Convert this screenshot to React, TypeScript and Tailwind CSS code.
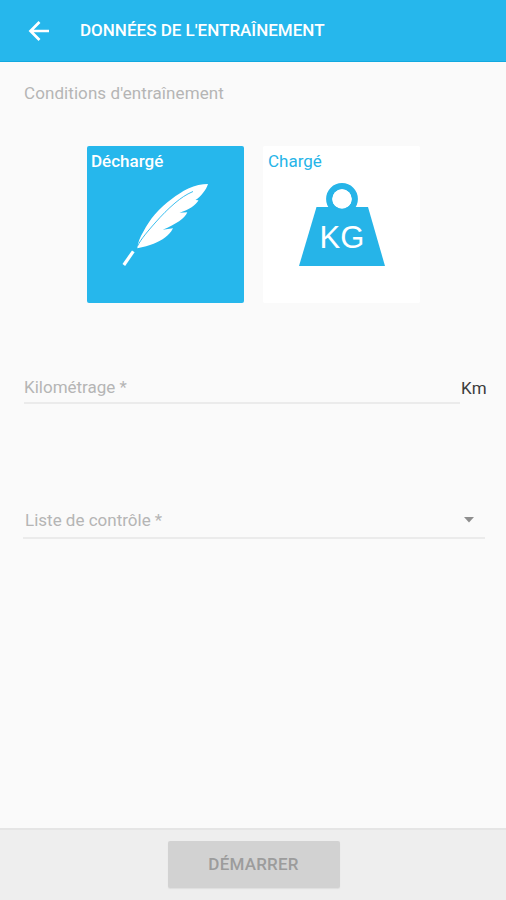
import { useState } from 'react';
import { clsx } from 'clsx';

type Condition = 'unloaded' | 'loaded';

const BackIcon = () => (
  <svg viewBox="0 0 22 22" className="w-[22px] h-[22px]" fill="none" stroke="white" strokeWidth="2.7">
    <path d="M21 11H3M11.500 2L2.500 11l9 9" />
  </svg>
);

const FeatherIcon = () => (
  <svg viewBox="0 0 90 90" className="w-[90px] h-[90px]">
    <path
      d="M17.300 68.300C18 62 20 57 23.300 51.700C26.500 46 30 40 35 34.300C40 28.500 46 23 51.700 19C57 15 62 11.500 68.300 8.500C75 5.300 82 4 88 4C87 7 85.500 10 83.300 12.500C81 15.500 78.500 18 75.500 20L78.500 20.300C76 25 69 30 59.500 32.700L67.300 32.300C65 38 56 44.500 42.700 49.700L53 48.300C50.500 53 48 55.500 45 57.500C39 62 30 66 17.300 68.300Z"
      fill="white"
    />
    <path d="M17.500 66C21 59 28 51 35 43C42 35 48 29 55 23C61 18 66 14.500 73 11.500" fill="none" stroke="#26b7ec" strokeWidth="0.9" />
    <path d="M13.300 71.300L3.800 85" stroke="white" strokeWidth="3.200" />
  </svg>
);

const WeightIcon = () => (
  <svg viewBox="0 0 86 84" className="w-[86px] h-[84px]">
    <circle cx="43" cy="17" r="12.800" fill="none" stroke="#26b4e8" strokeWidth="6.200" />
    <path d="M17.500 25H69L86 84H0Z" fill="#26b4e8" />
    <circle cx="43" cy="17" r="9.700" fill="white" />
    <text x="43" y="66" textAnchor="middle" fontSize="31" fontFamily="'Liberation Sans', sans-serif" fill="white">
      KG
    </text>
  </svg>
);

export default function App() {
  const [condition, setCondition] = useState<Condition>('unloaded');

  const cardClass = (value: Condition) =>
    clsx(
      'w-[157px] h-[157px] rounded-[2px] flex flex-col text-left text-[17px] leading-5 pt-[5px]',
      condition === value ? 'bg-[#26b7ec]' : 'bg-white',
    );

  return (
    <div className="h-screen flex flex-col bg-[#fafafa] font-['Roboto',sans-serif]">
      <header className="h-[62px] shrink-0 flex items-center bg-[#26b7ec] border-b border-[#12a9df] pl-7">
        <button aria-label="Retour">
          <BackIcon />
        </button>
        <h1 className="ml-[30px] text-[17px] font-medium text-white whitespace-nowrap">
          DONNÉES DE L'ENTRAÎNEMENT
        </h1>
      </header>

      <main className="flex-1 text-[17px] leading-5 text-[#b5b5b5]">
        <p className="pl-6 pt-[21px] tracking-[0.08px]">Conditions d'entraînement</p>

        <div className="flex justify-center gap-[19px] mt-[43px] pl-px">
          <button className={cardClass('unloaded')} onClick={() => setCondition('unloaded')}>
            <span className="pl-1 font-medium text-white">Déchargé</span>
            <span className="pl-[33px] pt-[9px]">
              <FeatherIcon />
            </span>
          </button>
          <button className={cardClass('loaded')} onClick={() => setCondition('loaded')}>
            <span className="pl-[5px] text-[#26b4e8]">Chargé</span>
            <span className="pl-9 pt-[11px]">
              <WeightIcon />
            </span>
          </button>
        </div>

        <div className="flex items-start mt-[74px] pl-6">
          <label className="w-[436px] h-[27px] border-b-2 border-[#ebebeb]">Kilométrage *</label>
          <span className="pl-[1px] pt-[1px] tracking-[0.3px] text-[#3c3c3c]">Km</span>
        </div>

        <div className="flex justify-between ml-[23px] w-[462px] h-[29px] mt-[106px] pl-[2px] pr-[11px] border-b-2 border-[#ebebeb]">
          <span>Liste de contrôle *</span>
          <svg viewBox="0 0 10 6" className="w-[10px] h-[6px] mt-[7px]">
            <path d="M0 0h10L5 5.500z" fill="#8e8e8e" />
          </svg>
        </div>
      </main>

      <footer className="h-[72px] shrink-0 flex justify-center items-start pt-[11px] pl-px bg-[#eeeeee] border-t-2 border-[#e5e5e5]">
        <button className="w-[172px] h-[47px] rounded-[2px] bg-[#d2d2d2] text-[17px] tracking-[0.2px] font-medium text-[#9c9c9c] shadow-[0_1px_1px_#dedede]">
          DÉMARRER
        </button>
      </footer>
    </div>
  );
}
